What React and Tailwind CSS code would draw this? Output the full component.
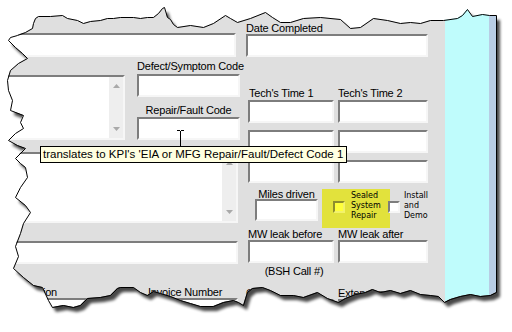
import React from "react";

const sunken =
  "border-2 border-t-[#7d7d7d] border-l-[#7d7d7d] border-r-[#f6f6f6] border-b-[#f6f6f6] bg-white";

const TOP =
  "33,23 35,18 38,16 50,16 62,15 67,18 77,20 83,23 90,21 100,20 107,18 113,18 120,17 133,17 140,18 147,17 153,17 158,13 162,8 164,7 167,17 170,19 173,24 177,27 190,25 203,27 213,23 225,15 230,18 237,22 250,18 265,12 272,17 280,22 290,22 303,18 320,17 340,19 350,28 360,27 373,18 387,20 400,23 410,22 420,23 430,20 443,20 457,18 462,15 467,9 472,16 482,14 489,15 496,15";
const BOTTOM =
  "496,292 490,295 480,296 470,294 460,296 450,299 444,302 438,296 430,295 420,294 410,290 400,293 390,290 380,292 372,289 365,292 355,294 345,298 338,302 327,298 317,292 303,297 293,295 280,295 270,290 262,287 252,288 247,292 243,305 238,302 233,300 223,302 213,306 200,306 190,303 180,300 170,296 160,293 153,291 147,295 140,292 133,287 120,287 117,288 110,295 100,297 87,298 80,305 73,307 63,305 52,307 48,300 42,287 33,285 23,277 13,268";
const LEFT =
  "18,256 15,246 20,233 23,223 30,212 25,205 15,197 20,187 27,177 25,167 20,163 15,158 25,148 17,145 8,140 15,133 23,128 20,122 23,115 10,110 12,100 8,90 7,80 10,70 18,63 27,58 22,53 15,47 8,40 10,37 17,35 25,32 32,28";

const poly = "M" + [TOP, BOTTOM, LEFT].join(" ").trim().split(" ").join(" L") + " Z";
const outside = "M0 0 H512 V332 H0 Z " + poly;

function Field({ className = "" }) {
  return <div className={`${sunken} ${className}`} />;
}

function ScrollBox({ className = "" }) {
  return (
    <div className={`${sunken} flex justify-end ${className}`}>
      <div className="w-[14px] h-full bg-[#eeeeee] flex flex-col items-center justify-between py-[7px]">
        <svg width="7" height="4" viewBox="0 0 7 4">
          <path d="M0 4 L3.5 0 L7 4 Z" fill="#a9a9a9" />
        </svg>
        <svg width="7" height="4" viewBox="0 0 7 4">
          <path d="M0 0 L3.5 4 L7 0 Z" fill="#a9a9a9" />
        </svg>
      </div>
    </div>
  );
}

function TornEdge() {
  return (
    <svg className="absolute left-0 top-0 pointer-events-none" width="512" height="332" viewBox="0 0 512 332">
      <defs>
        <filter id="blur" x="-10%" y="-10%" width="120%" height="120%">
          <feGaussianBlur stdDeviation="1.8" />
        </filter>
        <clipPath id="outside">
          <path d={outside} clipRule="evenodd" />
        </clipPath>
      </defs>
      <path d={outside} fill="#ffffff" fillRule="evenodd" />
      <g clipPath="url(#outside)">
        <path d={poly} transform="translate(4 5)" fill="#000" opacity="0.72" filter="url(#blur)" />
      </g>
      <path d={poly} transform="translate(0.5 0.5)" fill="none" stroke="#000" strokeWidth="1" />
    </svg>
  );
}

function LeftCol() {
  return (
    <div className="w-[240px] flex flex-col pt-[33px]">
      <Field className="w-[236px] h-[24px]" />
      <div className="mt-[3px] flex">
        <ScrollBox className="mt-[15px] w-[125px] h-[65px]" />
        <div className="ml-[12px] w-[103px] flex flex-col">
          <div className="h-[14px] leading-[13px] whitespace-nowrap">Defect/Symptom Code</div>
          <Field className="h-[23px]" />
          <div className="h-[20px] flex items-end justify-center leading-[14px] whitespace-nowrap">Repair/Fault Code</div>
          <Field className="h-[23px]" />
        </div>
      </div>
      <ScrollBox className="mt-[12px] w-[238px] h-[71px]" />
      <Field className="mt-[18px] w-[238px] h-[23px]" />
      <div className="mt-[22px] h-[12px] flex leading-[12px] whitespace-nowrap">
        <div className="w-[57px] text-right">Description</div>
        <div className="ml-[91px]">Invoice Number</div>
      </div>
      <div className="flex gap-[8px]">
        <Field className="w-[130px] h-[23px]" />
        <Field className="w-[100px] h-[23px]" />
      </div>
    </div>
  );
}

function RightCol() {
  return (
    <div className="ml-[6px] w-[182px] flex flex-col pt-[22px]">
      <div className="h-[12px] leading-[12px] whitespace-nowrap">Date Completed</div>
      <Field className="w-[182px] h-[23px]" />

      <div className="mt-[28px] h-[15px] flex items-end leading-[13px] whitespace-nowrap">
        <div className="ml-[3px] w-[89px]">Tech's Time 1</div>
        <div>Tech's Time 2</div>
      </div>
      <div className="flex flex-col gap-[7px] ml-[2px]">
        {[0, 1, 2].map((i) => (
          <div key={i} className="flex gap-[4px]">
            <Field className="w-[86px] h-[23px]" />
            <Field className="w-[90px] h-[23px]" />
          </div>
        ))}
      </div>

      <div className="mt-[6px] flex h-[39px]">
        <div className="ml-[9px] w-[63px] flex flex-col">
          <div className="h-[10px] leading-[10px] text-center whitespace-nowrap">Miles driven</div>
          <Field className="h-[22px]" />
        </div>
        <div className="ml-[4px] w-[68px] h-[39px] bg-[#e2e23c] flex items-start">
          <div className="ml-[11px] mt-[12px] w-[12px] h-[12px] border-2 border-t-[#8e8e2e] border-l-[#8e8e2e] border-r-[#f3f36a] border-b-[#f3f36a] bg-[#ffff3c]" />
          <div className="ml-[6px] mt-[2px] text-[8px] leading-[10px] tracking-normal font-['DejaVu_Sans',sans-serif]">
            Sealed<br />System<br />Repair
          </div>
        </div>
        <div className="-ml-[2px] mt-[12px] w-[12px] h-[12px] border-2 border-t-[#7d7d7d] border-l-[#7d7d7d] border-r-[#f6f6f6] border-b-[#f6f6f6] bg-white" />
        <div className="ml-[4px] mt-[2px] text-[8px] leading-[10px] tracking-normal font-['DejaVu_Sans',sans-serif]">
          Install<br />and<br />Demo
        </div>
      </div>

      <div className="h-[12px] flex leading-[12px] whitespace-nowrap">
        <div className="ml-[2px] w-[90px]">MW leak before</div>
        <div>MW leak after</div>
      </div>
      <div className="ml-[2px] flex gap-[4px]">
        <Field className="w-[86px] h-[23px]" />
        <Field className="w-[90px] h-[23px]" />
      </div>
      <div className="ml-[2px] w-[92px] mt-[2px] h-[12px] leading-[12px] text-center">(BSH Call #)</div>
      <div className="mt-[10px] h-[12px] flex leading-[12px] whitespace-nowrap">
        <div className="w-[92px]">Cost</div>
        <div>Extension</div>
      </div>
      <div className="ml-[2px] flex gap-[4px]">
        <Field className="w-[86px] h-[23px]" />
        <Field className="w-[90px] h-[23px]" />
      </div>
    </div>
  );
}

export default function App() {
  return (
    <div className="relative w-[512px] h-[332px] overflow-hidden bg-white text-black text-[11px] tracking-[-0.2px] font-['Liberation_Sans',Arial,sans-serif]">
      <div className="flex h-full">
        <div className="w-[445px] h-full bg-[#dfdfdf] flex">
          <LeftCol />
          <RightCol />
        </div>
        <div className="w-[44px] h-full bg-[#bffcfc]" />
        <div className="w-[7px] h-full bg-[#b8cde4]" />
      </div>

      <TornEdge />

      {/* tooltip over the form */}
      <div className="absolute left-[40px] top-[146px] w-[307px] h-[17px] bg-[#ffffe1] border border-black px-[2px] text-[11.5px] leading-[15px] tracking-normal whitespace-nowrap">
        translates to KPI's 'EIA or MFG Repair/Fault/Defect Code 1
      </div>

      {/* text cursor */}
      <svg className="absolute left-[177px] top-[130px]" width="7" height="17" viewBox="0 0 7 17">
        <path d="M0 0.5 H3 M4 0.5 H7 M3.5 1 V16 M0 16.5 H3 M4 16.5 H7" stroke="#000" strokeWidth="1" fill="none" />
      </svg>
    </div>
  );
}
